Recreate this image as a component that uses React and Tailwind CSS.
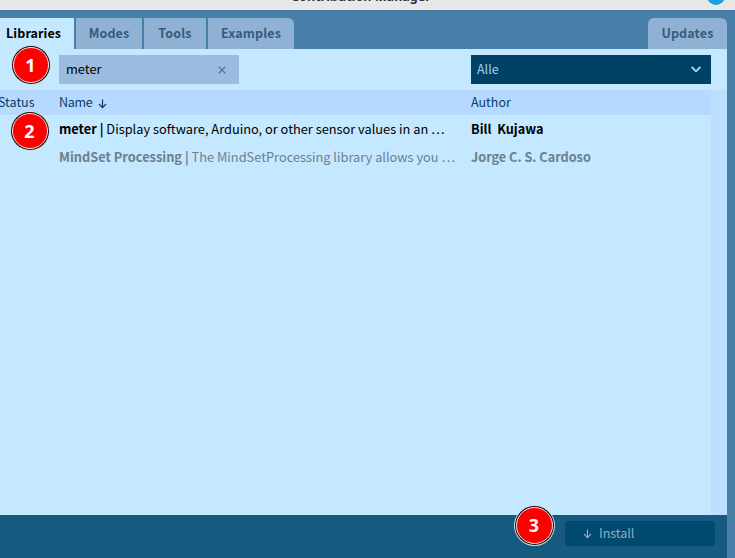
const tab =
  "h-[31px] shrink-0 bg-[#8fb1d4] text-[#355c7c] font-bold text-[12.5px] leading-[30px] text-center tracking-[0.15px]";

function Badge({ n, className }) {
  return (
    <div className={`absolute rounded-full bg-[#d5dde2] p-px ${className}`}>
      <div className="size-full rounded-full bg-[#101010] p-[1.3px]">
        <div className="flex size-full items-center justify-center rounded-full border border-[#f3e6e6] bg-[#ff0000] pr-px pb-px font-['Open_Sans','Noto_Sans',sans-serif] text-[18px] leading-none font-bold text-white">
          {n}
        </div>
      </div>
    </div>
  );
}

function ArrowDown({ className }) {
  return (
    <svg className={className} width="9" height="10" viewBox="0 0 9 10" fill="none" stroke="currentColor" strokeWidth="1.2">
      <path d="M4.5 0.5V8.5M1 5L4.5 8.6L8 5" />
    </svg>
  );
}

function Row({ name, text, author, className }) {
  return (
    <div className={`flex h-7 items-center pl-[59px] text-[12.8px] leading-7 ${className}`}>
      <div className="flex w-[412px] shrink-0">
        <span className="shrink-0 font-bold">{name} |</span>
        <span className="shrink-0">{text}</span>
      </div>
      <span className="text-[12.7px] font-bold">{author}</span>
    </div>
  );
}

export default function App() {
  return (
    <div className="relative flex h-[558px] w-[735px] flex-col overflow-hidden bg-[#487fa8] font-['Noto_Sans_CJK_SC',sans-serif] text-[12.8px] whitespace-pre">
      <header className="relative h-[10px] shrink-0 overflow-hidden bg-[#e8e8e8]">
        <div className="absolute top-[-13px] left-[291px] font-['Noto_Sans',sans-serif] text-[12.6px] leading-5 font-bold text-[#303338]">
          Contribution Manager
        </div>
        <div className="absolute top-[-13px] left-[707px] size-[18px] rounded-full bg-[#1d9fe2]" />
      </header>
      <div className="flex min-h-0 flex-1">
        <main className="flex w-[727px] shrink-0 flex-col">
          <nav className="flex h-[39px] shrink-0 gap-[2px] pt-2">
            <div className="h-[31px] w-[74px] bg-[#c4e8ff] pl-[6px] text-[12.5px] leading-[30px] font-bold tracking-[0.1px]">
              Libraries
            </div>
            <div className={`${tab} w-[66px]`}>Modes</div>
            <div className={`${tab} w-[62px]`}>Tools</div>
            <div className={`${tab} w-[86px] rounded-tr-[6px]`}>Examples</div>
            <div className={`${tab} ml-auto w-[79px] rounded-t-[6px]`}>Updates</div>
          </nav>
          <div className="flex h-[41px] shrink-0 bg-[#c4e8ff] pt-[6px] pl-[59px]">
            <div className="flex h-[29px] w-[180px] items-center justify-between bg-[#9bbcdf] pr-[13px] pl-[7px]">
              <span className="pb-[2px]">meter</span>
              <svg width="8" height="8" viewBox="0 0 8 8" stroke="#466c8d" strokeWidth="1.1">
                <path d="M0.7 0.7L7.3 7.3M7.3 0.7L0.7 7.3" />
              </svg>
            </div>
            <div className="ml-[232px] flex h-[29px] w-[240px] items-center justify-between bg-[#004266] pr-[10px] pl-[6px] text-[#9fcfee]">
              <span className="text-[12.5px]">Alle</span>
              <svg width="10" height="7" viewBox="0 0 10 7" fill="none" stroke="#aedbf8" strokeWidth="1.8">
                <path d="M0.7 1L5 5.3L9.3 1" />
              </svg>
            </div>
          </div>
          <section className="flex min-h-0 flex-1 bg-[#c4e8ff]">
            <div className="w-[711px] overflow-hidden">
              <div className="flex h-[25px] items-center bg-[#b6d9ff] pb-px text-[12.5px] leading-[24px] text-[#083c68]">
                <span className="-ml-[2px] w-[61px] shrink-0">Status</span>
                <span className="w-[33px] tracking-[-0.3px]">Name</span>
                <ArrowDown className="mt-[3px] ml-[6px]" />
                <span className="ml-auto w-[240px]">Author</span>
              </div>
              <Row name="meter" text=" Display software, Arduino, or other sensor values in an …" author="Bill  Kujawa" className="text-black" />
              <Row name="MindSet Processing" text=" The MindSetProcessing library allows you …" author="Jorge C. S. Cardoso" className="text-[#6e7f8d]" />
            </div>
            <div className="w-4 bg-[#bddfff]" />
          </section>
          <footer className="flex h-[43px] shrink-0 justify-end bg-[#165a80] pt-[6px] pr-3">
            <div className="flex h-[25px] w-[150px] items-center rounded-[4px] bg-[#004a70] pl-[18px] text-[#8fadc1]">
              <ArrowDown />
              <span className="ml-[7px] text-[12.5px]">Install</span>
            </div>
          </footer>
        </main>
      </div>
      <Badge n="1" className="top-[45px] left-[11px] size-[40px]" />
      <Badge n="2" className="top-[111px] left-[10px] size-[40px]" />
      <Badge n="3" className="top-[505px] left-[514px] size-[41px]" />
    </div>
  );
}
